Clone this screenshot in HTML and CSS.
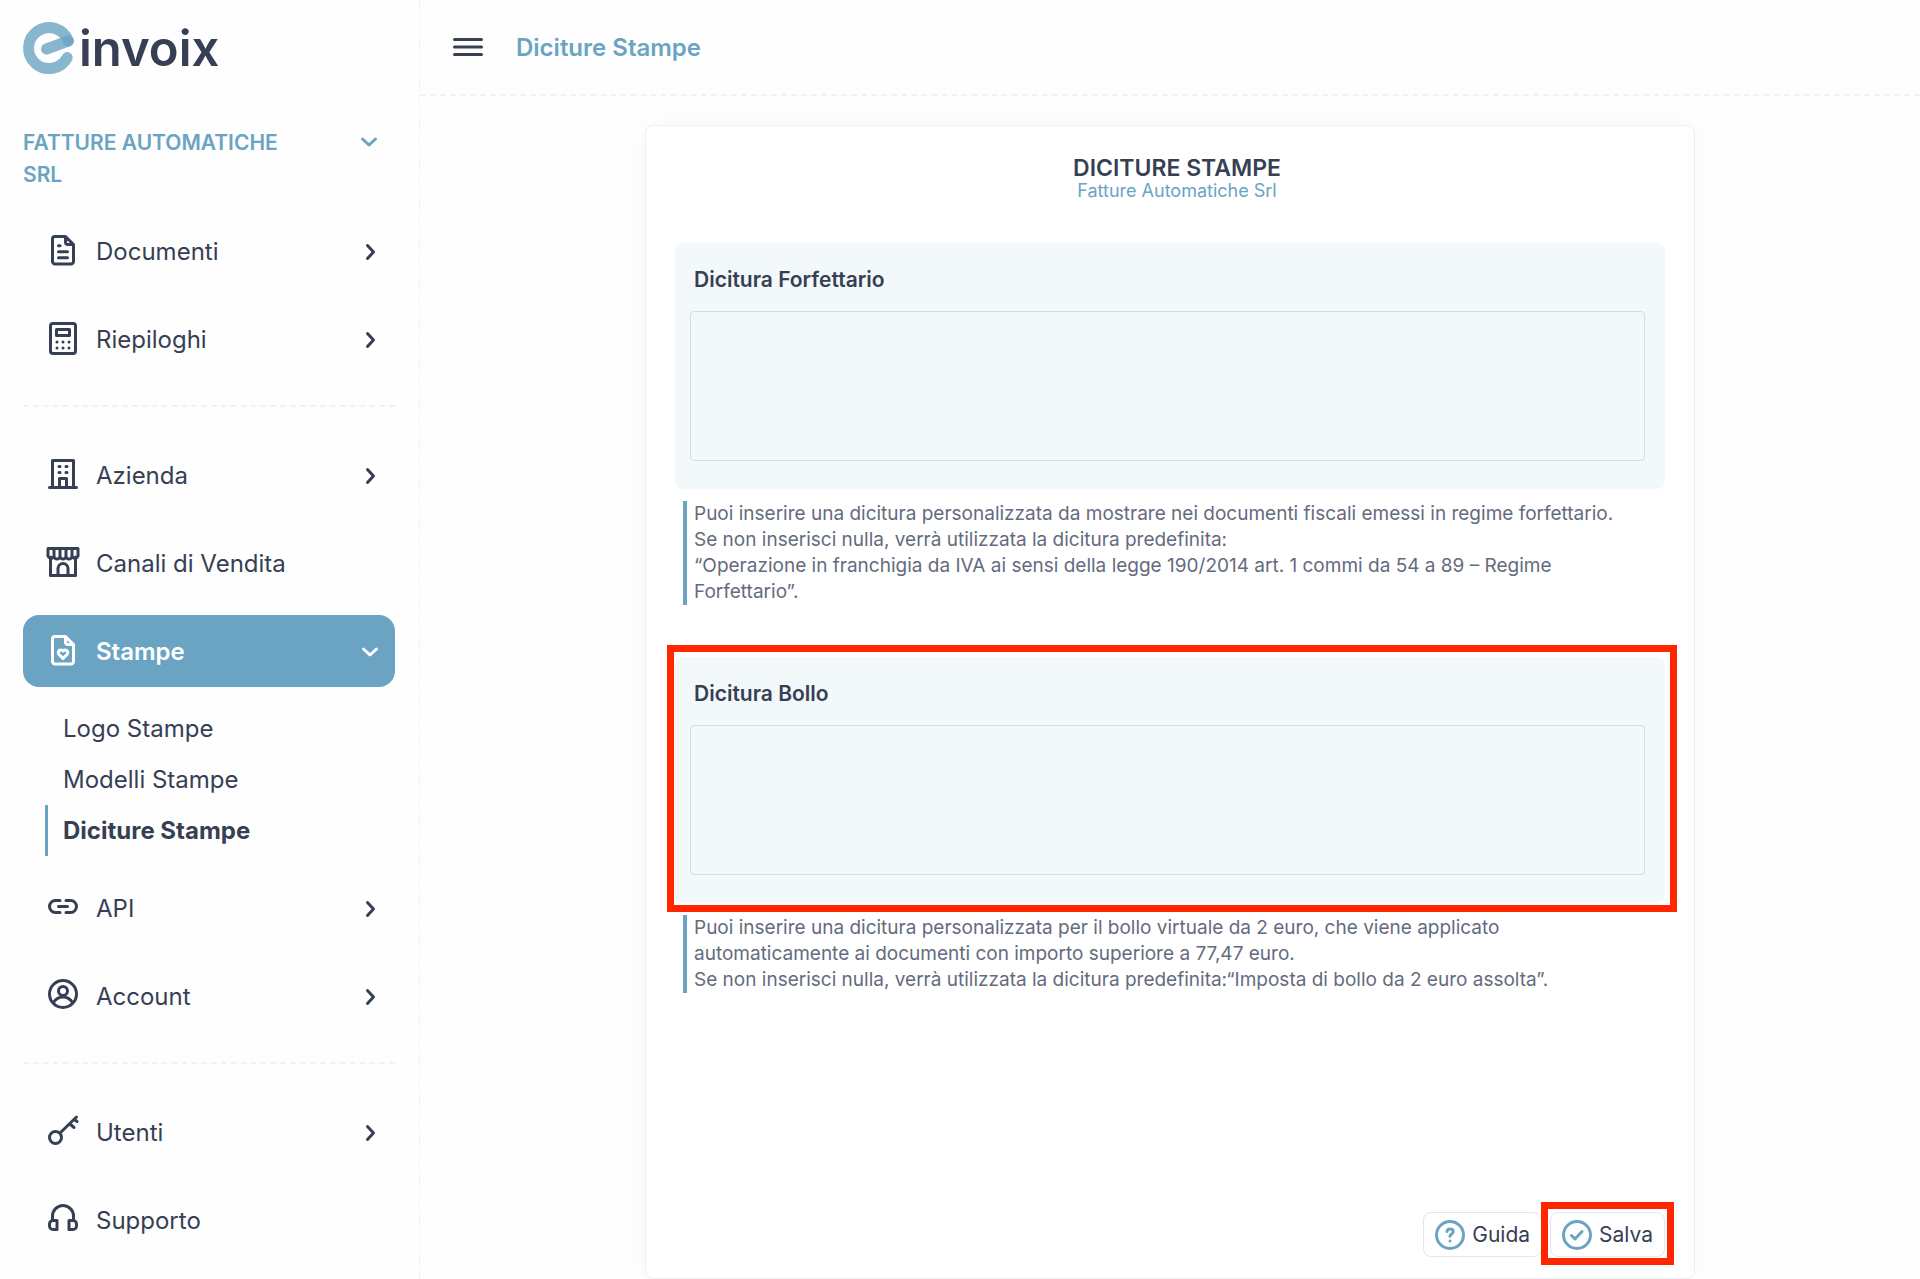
FILE: index.html
```html
<!DOCTYPE html>
<html lang="it">
<head>
<meta charset="utf-8">
<meta name="viewport" content="width=device-width, initial-scale=1">
<title>Diciture Stampe - einvoix</title>
<link rel="stylesheet" href="styles.css">
</head>
<body>
<svg class="sprite" aria-hidden="true">
  <symbol id="i-right" viewBox="0 0 20 20"><path d="M7.500 4.500 13.500 11l-6 6.500"/></symbol>
  <symbol id="i-down" viewBox="0 0 20 20"><path d="M3.500 8 10 14l6.500-6"/></symbol>
  <symbol id="i-doc" viewBox="0 0 36 36"><path d="M20.500 3.500H10A2.500 2.500 0 0 0 7.500 6v22.500A2.500 2.500 0 0 0 10 31h16a2.500 2.500 0 0 0 2.500-2.500v-17zM20.500 4v5a2.500 2.500 0 0 0 2.500 2.500h5M13.500 12.700h1.500M13.500 18.700h9M13.500 24.700h9"/></symbol>
  <symbol id="i-calc" viewBox="0 0 36 36"><rect x="5.500" y="2.500" width="25" height="30" rx="2.500"/><rect x="11.500" y="8.500" width="13" height="6"/><path d="M12 21h.01M18 21h.01M24 21h.01M12 27h.01M18 27h.01M24 27h.01"/></symbol>
  <symbol id="i-building" viewBox="0 0 36 36"><path d="M4.500 30.500h27M7.500 30.500v-27h21v27M14.500 30v-8.500h7V30M14 9.500h1M21 9.500h1M14 15.500h1M21 15.500h1"/></symbol>
  <symbol id="i-store" viewBox="0 0 36 36"><path d="M3 3.500h30V9a3 3 0 0 1-6 2 3 3 0 0 1-6 0 3 3 0 0 1-6 0 3 3 0 0 1-6 0A3 3 0 0 1 3 9zM9 3.500V11M15 3.500V11M21 3.500V11M27 3.500V11M5.500 12v18.500h25V12M13 30v-6.500a5 5 0 0 1 10 0V30"/></symbol>
  <symbol id="i-heartdoc" viewBox="0 0 36 36"><path d="M20.500 3.500H10A2.500 2.500 0 0 0 7.500 6v22.500A2.500 2.500 0 0 0 10 31h16a2.500 2.500 0 0 0 2.500-2.500v-17zM20.500 4v5a2.500 2.500 0 0 0 2.500 2.500h5M18 25.500l-4.200-4.300a2.600 2.600 0 0 1 4.200-3.200 2.600 2.600 0 0 1 4.200 3.200z"/></symbol>
  <symbol id="i-link" viewBox="0 0 36 36"><path d="M15 10.500h-4.500a6 6 0 0 0 0 12H15M21 10.500h4.500a6 6 0 0 1 0 12H21M13.500 16.500h9"/></symbol>
  <symbol id="i-user" viewBox="0 0 36 36"><circle cx="18" cy="16" r="13.500"/><circle cx="18" cy="13" r="4.500"/><path d="M8.500 24.500C11 20.500 14.500 19 18 19s7 1.500 9.500 5.500"/></symbol>
  <symbol id="i-key" viewBox="0 0 36 36"><circle cx="10.500" cy="23.500" r="6"/><path d="M15 19 31.500 3M25 10l4 3.500M29.500 5.500 32 7.500"/></symbol>
  <symbol id="i-phones" viewBox="0 0 36 36"><path d="M7.500 18v-4a10.500 10.500 0 0 1 21 0v4M12 18.500v9H8A3.500 3.500 0 0 1 4.500 24v-2A3.500 3.500 0 0 1 8 18.500zM24 18.500v9h4a3.500 3.500 0 0 0 3.500-3.500v-2a3.500 3.500 0 0 0-3.500-3.500z"/></symbol>
</svg>
<div class="app">
  <aside class="sidebar">
    <a class="logo" href="#" aria-label="einvoix">
      <svg class="logo-mark" viewBox="0 0 52 52" aria-hidden="true"><path d="M45.300 19A20.500 20.500 0 1 0 44.200 35.600"/><path d="M23.500 27 45.300 19"/></svg>
      <span class="logo-text">invoix</span>
    </a>
    <button class="company" type="button"><span>FATTURE AUTOMATICHE SRL</span><svg class="chev"><use href="#i-down"/></svg></button>
    <nav class="nav">
      <a class="item" href="#"><svg class="icon"><use href="#i-doc"/></svg><span>Documenti</span><svg class="chev"><use href="#i-right"/></svg></a>
      <a class="item" href="#"><svg class="icon"><use href="#i-calc"/></svg><span>Riepiloghi</span><svg class="chev"><use href="#i-right"/></svg></a>
      <hr class="divider">
      <a class="item" href="#"><svg class="icon"><use href="#i-building"/></svg><span>Azienda</span><svg class="chev"><use href="#i-right"/></svg></a>
      <a class="item" href="#"><svg class="icon"><use href="#i-store"/></svg><span>Canali di Vendita</span></a>
      <a class="item item-active" href="#"><svg class="icon"><use href="#i-heartdoc"/></svg><span>Stampe</span><svg class="chev"><use href="#i-down"/></svg></a>
      <div class="subnav">
        <a class="subitem" href="#">Logo Stampe</a>
        <a class="subitem" href="#">Modelli Stampe</a>
        <a class="subitem subitem-active" href="#">Diciture Stampe</a>
      </div>
      <a class="item" href="#"><svg class="icon"><use href="#i-link"/></svg><span>API</span><svg class="chev"><use href="#i-right"/></svg></a>
      <a class="item" href="#"><svg class="icon"><use href="#i-user"/></svg><span>Account</span><svg class="chev"><use href="#i-right"/></svg></a>
      <hr class="divider">
      <a class="item" href="#"><svg class="icon"><use href="#i-key"/></svg><span>Utenti</span><svg class="chev"><use href="#i-right"/></svg></a>
      <a class="item" href="#"><svg class="icon"><use href="#i-phones"/></svg><span>Supporto</span></a>
    </nav>
  </aside>
  <div class="main">
    <header class="topbar">
      <button class="menu" type="button" aria-label="Menu"><svg viewBox="0 0 30 20"><path d="M1.500 2.500h27M1.500 10h27M1.500 17.500h27"/></svg></button>
      <h1 class="page-title">Diciture Stampe</h1>
    </header>
    <main class="content">
      <form class="card">
        <div class="card-head">
          <h2 class="card-title">DICITURE STAMPE</h2>
          <p class="card-sub">Fatture Automatiche Srl</p>
        </div>
        <section class="field">
          <div class="panel">
            <label class="label" for="forfettario">Dicitura Forfettario</label>
            <textarea class="area" id="forfettario"></textarea>
          </div>
          <p class="help">Puoi inserire una dicitura personalizzata da mostrare nei documenti fiscali emessi in regime forfettario.<br>Se non inserisci nulla, verrà utilizzata la dicitura predefinita:<br>“Operazione in franchigia da IVA ai sensi della legge 190/2014 art. 1 commi da 54 a 89 – Regime<br>Forfettario”.</p>
        </section>
        <section class="field">
          <div class="panel panel-marked">
            <label class="label" for="bollo">Dicitura Bollo</label>
            <textarea class="area" id="bollo"></textarea>
          </div>
          <p class="help">Puoi inserire una dicitura personalizzata per il bollo virtuale da 2 euro, che viene applicato<br>automaticamente ai documenti con importo superiore a 77,47 euro.<br>Se non inserisci nulla, verrà utilizzata la dicitura predefinita:“Imposta di bollo da 2 euro assolta”.</p>
        </section>
        <div class="actions">
          <button class="btn" type="button"><svg viewBox="0 0 30 30"><circle cx="15" cy="15" r="13.500"/><path d="M12 11.500c.3-1.600 1.500-2.500 3.100-2.500 1.800 0 3.100 1.100 3.100 2.700 0 2.300-3.200 2.300-3.200 4.500M15 21v.01"/></svg>Guida</button>
          <button class="btn btn-marked" type="submit"><svg viewBox="0 0 30 30"><circle cx="15" cy="15" r="13.500"/><path d="m9.500 15.500 3.500 3.500 7-7.500"/></svg>Salva</button>
        </div>
      </form>
    </main>
  </div>
</div>
</body>
</html>
```

FILE: styles.css
```css
* { box-sizing: border-box; }
:root {
  --ink: #363f54;
  --accent: #6ba4c3;
  --mark: #ff2600;
  --dash: #f1f2f5;
}
body {
  margin: 0;
  background: #fefefe;
  color: var(--ink);
  font-family: Inter, "Liberation Sans", sans-serif;
  font-size: 24px;
}
h1, h2, p { margin: 0; }
a { color: inherit; text-decoration: none; }
button { font-family: inherit; color: inherit; background: none; border: 0; padding: 0; cursor: pointer; }
svg { fill: none; stroke: currentColor; stroke-width: 3; stroke-linecap: round; stroke-linejoin: round; flex: none; }
.sprite { display: none; }

.app { display: flex; min-height: 100vh; }
.sidebar { width: 420px; flex: none; padding: 22px 24px 0 23px; border-right: 1px dashed #eeeff2; }
.logo { display: flex; align-items: center; gap: 4px; height: 52px; }
.logo-mark { width: 52px; height: 52px; overflow: visible; stroke: var(--accent); stroke-width: 11; }
.logo-mark path { opacity: .8; }
.logo-text { font-size: 49px; font-weight: 600; line-height: 52px; padding-top: 2px; }

.company { display: flex; justify-content: space-between; width: 100%; margin: 53px 0 24px; padding-right: 16px; color: var(--accent); font-size: 21px; font-weight: 600; line-height: 32px; text-align: left; }
.company span { max-width: 270px; }
.chev { width: 20px; height: 20px; }
.company .chev { margin-top: 4px; }

.nav { display: flex; flex-direction: column; gap: 16px; }
.item { display: flex; align-items: center; gap: 15px; height: 72px; padding: 0 15px 0 22px; border-radius: 16px; }
.item .icon { width: 36px; height: 36px; }
.item .chev { margin-left: auto; }
.item-active { background: var(--accent); color: #fff; font-weight: 600; }
.divider { width: 100%; margin: 14px 0 16px; border: 0; border-top: 2px dashed var(--dash); }
.subnav { padding-left: 22px; }
.subitem { display: block; border-left: 3px solid transparent; padding-left: 15px; line-height: 51px; }
.subitem-active { border-left-color: var(--accent); font-weight: 700; }

.main { flex: 1; min-width: 0; display: flex; flex-direction: column; }
.topbar { display: flex; align-items: center; gap: 33px; height: 96px; padding-left: 33px; border-bottom: 2px dashed var(--dash); }
.menu { display: flex; }
.menu svg { width: 30px; height: 20px; }
.page-title { color: var(--accent); font-size: 24px; font-weight: 600; }
.content { flex: 1; display: flex; justify-content: center; padding-top: 29px; }
.card { display: flex; flex-direction: column; width: 70%; padding: 29px 29px 21px; background: #fff; border: 1px solid #eeeff2; border-radius: 8px; box-shadow: 0 0 24px rgba(0, 0, 0, .03); }
.card-head { text-align: center; height: 88px; padding-left: 14px; }
.card-title { font-size: 23px; font-weight: 600; line-height: 26px; }
.card-sub { color: var(--accent); font-size: 18px; line-height: 20px; }

.field { margin-bottom: 52px; }
.panel { position: relative; display: flex; flex-direction: column; padding: 21px 20px 28px 15px; background: #f3f8fb; border-radius: 8px; }
.label { padding: 0 4px; font-size: 21px; font-weight: 600; line-height: 32px; }
.area { height: 150px; margin-top: 15px; background: transparent; border: 1px solid #d6dce6; border-radius: 4px; resize: none; }
.help { margin: 12px 0 0 8px; padding-left: 7px; border-left: 4px solid var(--accent); color: #646b7e; font-size: 19px; line-height: 26px; }

.actions { display: flex; justify-content: flex-end; gap: 8px; margin-top: auto; }
.btn { position: relative; display: flex; align-items: center; gap: 7px; height: 45px; padding: 0 11px; border: 1px solid #e3e6ee; border-radius: 8px; font-size: 21px; }
.btn svg { width: 30px; height: 30px; stroke: var(--accent); }

/* highlight frames drawn over the form */
.panel-marked::after, .btn-marked::after { content: ""; position: absolute; border: 7px solid var(--mark); pointer-events: none; }
.panel-marked::after { inset: -12px -12px -9px -8px; }
.btn-marked::after { inset: -11px -10px -9px -10px; }
```
